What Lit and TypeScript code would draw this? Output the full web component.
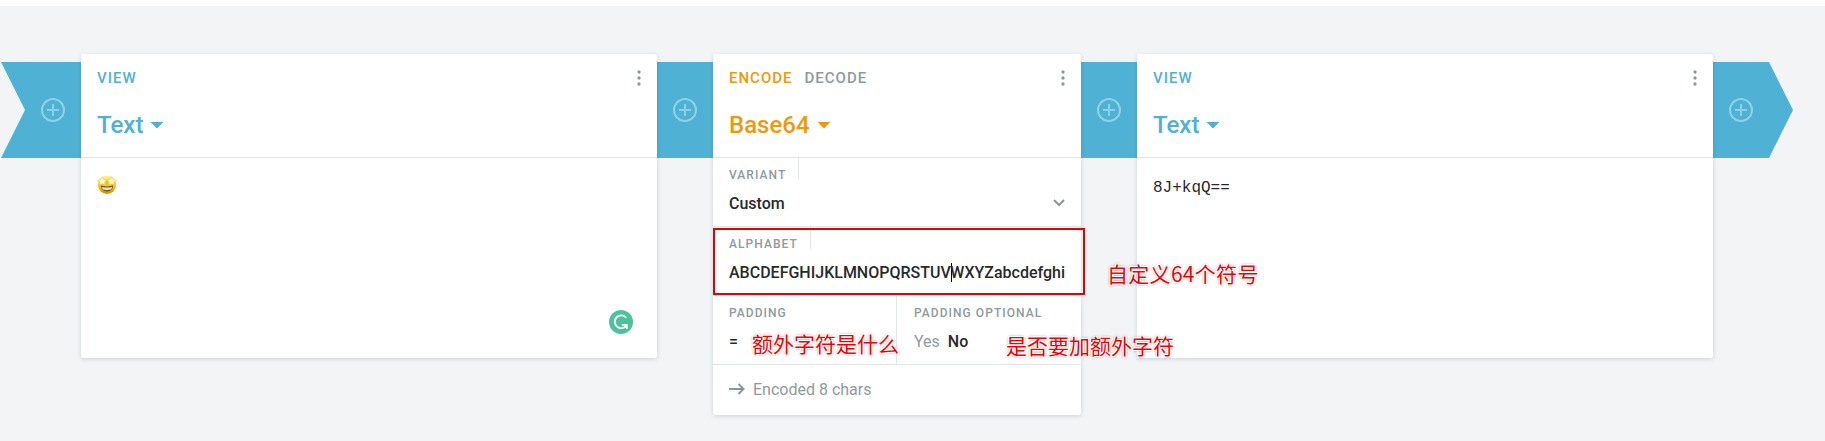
import { LitElement, html, css } from "lit";
import { customElement, property } from "lit/decorators.js";

@customElement("pipe-link")
class PipeLink extends LitElement {
  @property() shape = "middle";

  static styles = css`
    :host { display: block; flex: none; margin-top: 8px; height: 96px; }
    svg { display: block; }
    .bar { fill: #4fb1d4; }
    .plus { fill: none; stroke: #8ed1e4; stroke-width: 2; }
  `;

  render() {
    const wide = this.shape !== "middle";
    const w = wide ? 80 : 56;
    const cx = this.shape === "start" ? 52 : 28;
    const points = {
      start: "0,0 80,0 80,96 0,96 24,48",
      middle: "0,0 56,0 56,96 0,96",
      end: "0,0 56,0 80,48 56,96 0,96",
    }[this.shape];
    return html`<svg width=${w} height="96" viewBox="0 0 ${w} 96">
      <polygon class="bar" points=${points}></polygon>
      <circle class="plus" cx=${cx} cy="48" r="11"></circle>
      <path class="plus" d="M${cx - 6} 48h12M${cx} 42v12"></path>
    </svg>`;
  }
}

@customElement("brick-card")
class BrickCard extends LitElement {
  @property() name = "";
  @property({ type: Array }) modes: string[] = [];
  @property({ type: Boolean, reflect: true }) encoder = false;

  static styles = css`
    :host {
      display: flex; flex-direction: column; flex: none; box-sizing: border-box;
      position: relative; background: #fff; border-radius: 2px;
      box-shadow: 0 1px 4px rgba(30, 45, 55, 0.17);
      --accent: #4fb1d4;
    }
    :host([encoder]) { --accent: #f0980c; }
    .head { height: 103px; border-bottom: 1px solid #e2e6e9; padding: 0 16px; }
    .top { display: flex; align-items: center; height: 48px; gap: 12px; }
    .mode { font-size: 15px; font-weight: 500; letter-spacing: 1px; line-height: 20px; color: #8f999e; }
    .mode.on { color: var(--accent); }
    .menu { margin-left: auto; }
    .name { display: flex; align-items: center; height: 46px; gap: 7px; color: var(--accent);
      font-size: 24px; font-weight: 500; }
    svg { display: block; }
  `;

  render() {
    return html`<div class="head">
        <div class="top">
          ${this.modes.map((m, i) => html`<span class="mode ${i === 0 ? "on" : ""}">${m}</span>`)}
          <svg class="menu" width="4" height="16" viewBox="0 0 4 16" fill="#8b969b">
            <circle cx="2" cy="2" r="1.65"></circle><circle cx="2" cy="8" r="1.65"></circle><circle cx="2" cy="14" r="1.65"></circle>
          </svg>
        </div>
        <div class="name"><span>${this.name}</span>
          <svg width="14" height="8" viewBox="0 0 14 8" fill="currentColor"><path d="M.5 1h13L7 7.6z"></path></svg>
        </div>
      </div>
      <slot></slot>`;
  }
}

@customElement("app-root")
class AppRoot extends LitElement {
  static styles = css`
    :host {
      display: block; box-sizing: border-box; height: 441px; position: relative; overflow: hidden;
      background: #f2f4f6; border-top: 6px solid #fff; font-family: Roboto, sans-serif;
    }
    .pipe { display: flex; align-items: flex-start; padding: 48px 0 0 1px; }
    .view { width: 576px; height: 304px; }
    .enc { width: 368px; height: 361px; }
    .content { flex: 1; padding: 17px 16px; position: relative; color: #272a2c; }
    .out { font: 16px/26px "Liberation Mono", monospace; }
    .badge { position: absolute; right: 24px; bottom: 24px; }
    .field { box-sizing: border-box; height: 69px; border-bottom: 1px solid #e2e6e9; padding: 0 16px; flex: 1; }
    .label { display: flex; width: fit-content; box-sizing: border-box; height: 22px; padding-top: 10px;
      font-size: 12px; line-height: 14px; font-weight: 500; letter-spacing: 1.05px; color: #8f999e; }
    .label.cut { border-right: 1px solid #e2e6e9; padding-right: 12px; }
    .value { display: flex; align-items: center; height: 24px; margin-top: 11px; font-size: 16px;
      font-weight: 500; color: #272a2c; white-space: nowrap; }
    .value svg { margin-left: auto; }
    .alpha { overflow: hidden; }
    .caret { width: 1px; height: 19px; background: #000; margin-right: -1px; }
    .row { display: flex; }
    .row .field + .field { border-left: 1px solid #e2e6e9; padding-left: 17px; }
    .off { color: #8f999e; font-weight: 400; margin-right: 8px; }
    .foot { display: flex; align-items: center; height: 48px; padding: 0 16px; gap: 8px; font-size: 16px; color: #8f999e; }
    .box { position: absolute; box-sizing: border-box; left: 713px; top: 222px; width: 372px; height: 67px; border: 2px solid #e60000; }
    .note { position: absolute; white-space: nowrap; font: 21px/28px "Noto Sans CJK SC", sans-serif; color: #f00000;
      text-shadow: 0 0 1px #fff, 1px 1px 0 #fff, -1px -1px 0 #fff, 1px -1px 0 #fff, -1px 1px 0 #fff, 0 0 3px #777, 0 0 3px #999; }
    .n1 { left: 1107px; top: 253px; letter-spacing: .3px; }
    .n2 { left: 752px; top: 323px; }
    .n3 { left: 1006px; top: 325px; }
    svg { display: block; }
  `;

  private emoji() {
    return html`<svg width="20" height="20" viewBox="0 0 20 20">
      <defs><linearGradient id="face" x1="0" y1="0" x2="0" y2="1"><stop offset="0" stop-color="#fff58a"></stop><stop offset=".55" stop-color="#f3cc1c"></stop><stop offset="1" stop-color="#d48a05"></stop></linearGradient></defs>
      <circle cx="10" cy="9.8" r="9.2" fill="url(#face)"></circle>
      <path d="M3.8 10.6q6.2 1.6 12.4 0-.4 5.8-6.2 5.8t-6.2-5.8z" fill="#7a5518"></path>
      <path d="M4.8 12q5.2 1.2 10.4 0l-1 2.5q-4.2.8-8.4 0z" fill="#e8e5df"></path>
      <path d="M5.4 1.6l1.4 2.7 2.9.5-2 2.2.3 3-2.7-1.3-2.7 1.2.3-2.9L.4 5.3l3.3-.8z" fill="#fff7c4" stroke="#dcaf35" stroke-width=".4"></path>
      <path d="M14.6 1.6l-1.4 2.7-2.9.5 2 2.2-.3 3 2.7-1.3 2.7 1.2-.3-2.9 2.5-1.7-3.3-.8z" fill="#fff7c4" stroke="#dcaf35" stroke-width=".4"></path>
      <path d="M9.3 5.5h1.4l.6 5H8.7z" fill="#eac024"></path>
    </svg>`;
  }

  render() {
    return html`<div class="pipe">
        <pipe-link shape="start"></pipe-link>
        <brick-card class="view" name="Text" .modes=${["VIEW"]}>
          <div class="content">${this.emoji()}
            <svg class="badge" width="24" height="24" viewBox="0 0 24 24">
              <circle cx="12" cy="12" r="12" fill="#4cc39a"></circle>
              <path d="M17.2 7.8A6.4 6.4 0 1 0 17.6 15.2M12.8 14.9h5v4" fill="none" stroke="#fff" stroke-width="1.8"></path>
            </svg>
          </div>
        </brick-card>
        <pipe-link></pipe-link>
        <brick-card class="enc" name="Base64" encoder .modes=${["ENCODE", "DECODE"]}>
          <div>
            <div class="field"><div class="label cut">VARIANT</div>
              <div class="value">Custom<svg width="12" height="8" viewBox="0 0 12 8" fill="none" stroke="#8b969b" stroke-width="2"><path d="M1 1l5 5 5-5"></path></svg></div>
            </div>
            <div class="field"><div class="label cut">ALPHABET</div>
              <div class="value alpha"><span>ABCDEFGHIJKLMNOPQRSTUV</span><i class="caret"></i><span>WXYZabcdefghi</span></div>
            </div>
            <div class="row">
              <div class="field"><div class="label">PADDING</div><div class="value">=</div></div>
              <div class="field"><div class="label">PADDING OPTIONAL</div><div class="value"><span class="off">Yes</span>No</div></div>
            </div>
            <div class="foot"><svg width="16" height="12" viewBox="0 0 16 12" fill="none" stroke="#8b969b" stroke-width="2"><path d="M0 6h14.5M9.5 1l5 5-5 5"></path></svg>Encoded 8 chars</div>
          </div>
        </brick-card>
        <pipe-link></pipe-link>
        <brick-card class="view" name="Text" .modes=${["VIEW"]}>
          <div class="content out">8J+kqQ==</div>
        </brick-card>
        <pipe-link shape="end"></pipe-link>
      </div>
      <div class="box"></div>
      <div class="note n1">自定义64个符号</div>
      <div class="note n2">额外字符是什么</div>
      <div class="note n3">是否要加额外字符</div>`;
  }
}
